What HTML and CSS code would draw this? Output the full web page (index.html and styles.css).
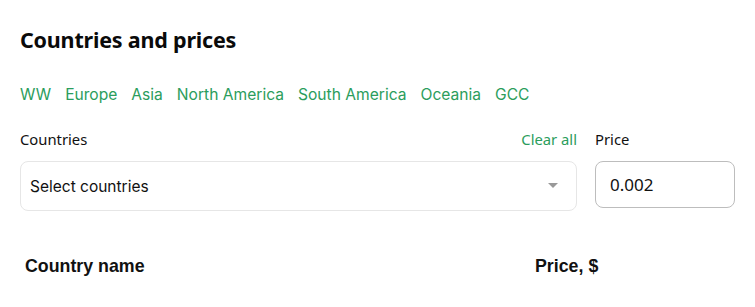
FILE: index.html
```html
<!DOCTYPE html>
<html lang="en">
<head>
<meta charset="utf-8">
<title>Countries and prices</title>
<link rel="stylesheet" href="styles.css">
</head>
<body>
<main class="page">
  <h2 class="title">Countries and prices</h2>
  <nav class="regions">
    <a class="region">WW</a>
    <a class="region">Europe</a>
    <a class="region">Asia</a>
    <a class="region">North America</a>
    <a class="region">South America</a>
    <a class="region">Oceania</a>
    <a class="region">GCC</a>
  </nav>
  <div class="fields">
    <div class="field countries">
      <div class="label-row">
        <span class="label">Countries</span>
        <a class="clear">Clear all</a>
      </div>
      <div class="select">
        <span class="placeholder">Select countries</span>
        <span class="caret"></span>
      </div>
    </div>
    <div class="field price">
      <div class="label-row">
        <span class="label">Price</span>
      </div>
      <div class="input">0.002</div>
    </div>
  </div>
  <div class="table-head">
    <span class="col-name">Country name</span>
    <span class="col-price">Price, $</span>
  </div>
</main>
</body>
</html>
```
FILE: styles.css
```css
* { box-sizing: border-box; }
html, body { margin: 0; background: #fff; }
body { font-family: "Noto Sans", sans-serif; color: #111; }
.page { padding: 26px 20px 0 20px; width: 755px; }
.title {
  margin: 0;
  font-family: "Noto Sans", sans-serif;
  font-weight: 700;
  font-size: 21.5px;
  line-height: 28px;
  letter-spacing: -0.2px;
  color: #0a0a0a;
}
.regions {
  display: flex;
  gap: 14px;
  margin-top: 31px;
  font-family: Inter, sans-serif;
  font-size: 15.6px;
  line-height: 20px;
}
.region { color: #2b9d5c; }
.fields {
  display: flex;
  gap: 18px;
  margin-top: 24px;
}
.field { display: flex; flex-direction: column; }
.countries { width: 557px; }
.price { width: 140px; }
.label-row {
  display: flex;
  justify-content: space-between;
  align-items: center;
  height: 20px;
  font-family: "Noto Sans", sans-serif;
  font-size: 14.8px;
}
.label { color: #111; }
.clear { color: #2b9d5c; }
.select {
  margin-top: 12px;
  height: 50px;
  border: 1px solid #e6e6e6;
  border-radius: 8px;
  display: flex;
  align-items: center;
  justify-content: space-between;
  padding: 0 18px 0 9px;
}
.placeholder {
  font-family: Inter, sans-serif;
  font-size: 15.5px;
  color: #111;
}
.caret {
  width: 0; height: 0;
  border-left: 5px solid transparent;
  border-right: 5px solid transparent;
  border-top: 5px solid #999;
  margin-top: -2px;
}
.input {
  margin-top: 12px;
  height: 47px;
  border: 1px solid #bdbdbd;
  border-radius: 8px;
  display: flex;
  align-items: center;
  padding: 0 14px;
  font-family: "Noto Sans", sans-serif;
  font-size: 17px;
  color: #111;
}
.table-head {
  display: flex;
  margin-top: 44px;
  padding-left: 5px;
  font-family: "Liberation Sans", Arial, sans-serif;
  font-weight: 700;
  font-size: 17.8px;
  line-height: 22px;
}
.col-name { width: 510px; }
```
